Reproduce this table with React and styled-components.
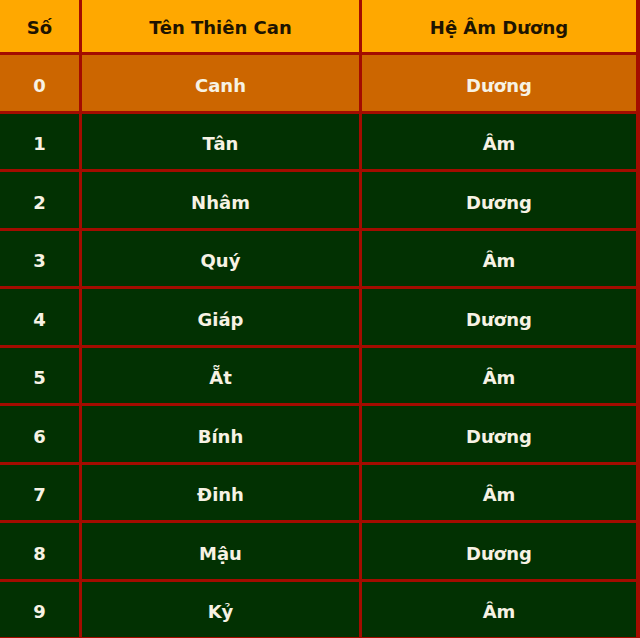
import React from "react";
import styled, { createGlobalStyle } from "styled-components";

const GlobalStyle = createGlobalStyle`
  html, body {
    margin: 0;
    padding: 0;
    background: #023102;
  }
  body {
    font-family: "DejaVu Sans", Tahoma, Verdana, sans-serif;
  }
`;

const Table = styled.table`
  width: 640px;
  border-collapse: separate;
  border-spacing: 0;
  table-layout: fixed;
  font-size: 18px;
  font-weight: bold;
`;

const HeadCell = styled.th`
  box-sizing: border-box;
  width: ${(p) => p.$w};
  height: 55px;
  padding: 2px 0 0;
  background: #ffa800;
  color: #1e1400;
  text-align: center;
  border-right: 3px solid #a30c00;
  border-bottom: 3px solid #a30c00;
  &:last-child {
    border-right-width: 4px;
  }
`;

const Cell = styled.td`
  box-sizing: border-box;
  height: 58.5px;
  padding: 5px 0 0;
  text-align: center;
  color: #f7f2e4;
  background: ${(p) => (p.$hot ? "#cc6600" : "#023102")};
  border-right: 3px solid #a30c00;
  border-bottom: 3px solid #a30c00;
  &:last-child {
    border-right-width: 4px;
  }
`;

const rows = [
  ["0", "Canh", "Dương"],
  ["1", "Tân", "Âm"],
  ["2", "Nhâm", "Dương"],
  ["3", "Quý", "Âm"],
  ["4", "Giáp", "Dương"],
  ["5", "Ẵt", "Âm"],
  ["6", "Bính", "Dương"],
  ["7", "Đinh", "Âm"],
  ["8", "Mậu", "Dương"],
  ["9", "Kỷ", "Âm"],
];

export default function App() {
  return (
    <>
      <GlobalStyle />
      <Table>
        <thead>
          <tr>
            <HeadCell $w="82px">Số</HeadCell>
            <HeadCell $w="280px">Tên Thiên Can</HeadCell>
            <HeadCell $w="278px">Hệ Âm Dương</HeadCell>
          </tr>
        </thead>
        <tbody>
          {rows.map((r, i) => (
            <tr key={r[0]}>
              {r.map((v, j) => (
                <Cell key={j} $hot={i === 0}>
                  {v}
                </Cell>
              ))}
            </tr>
          ))}
        </tbody>
      </Table>
    </>
  );
}
